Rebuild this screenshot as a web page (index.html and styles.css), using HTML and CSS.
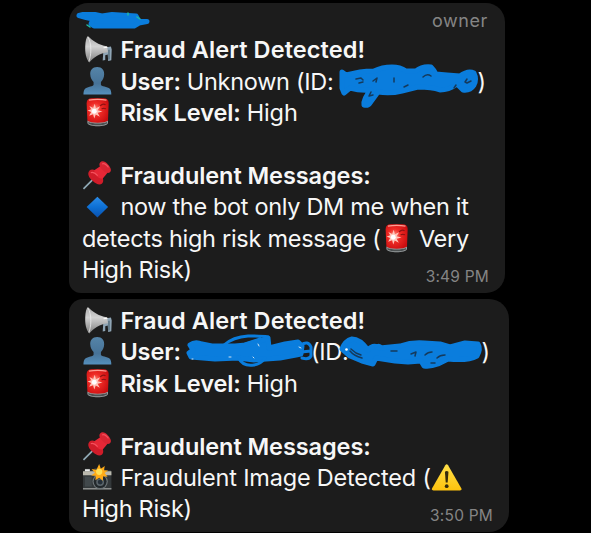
FILE: index.html
```html
<!DOCTYPE html>
<html lang="en">
<head>
<meta charset="utf-8">
<title>Fraud alerts</title>
<link rel="stylesheet" href="styles.css">
</head>
<body>
<svg class="defs" aria-hidden="true">
  <defs>
    <linearGradient id="metal" x1="0" y1="0" x2="0" y2="1"><stop offset="0" stop-color="#aaa"/><stop offset=".4" stop-color="#d2d2d2"/><stop offset="1" stop-color="#808080"/></linearGradient>
    <linearGradient id="person" x1="0" y1="0" x2="0" y2="1"><stop offset="0" stop-color="#5584a8"/><stop offset=".6" stop-color="#477398"/><stop offset="1" stop-color="#5590bd"/></linearGradient>
    <radialGradient id="lamp" cx=".4" cy=".45" r=".65"><stop offset="0" stop-color="#ff8b7d"/><stop offset=".4" stop-color="#ef2b25"/><stop offset="1" stop-color="#c90d10"/></radialGradient>
    <linearGradient id="gem" x1="0" y1="0" x2="0" y2="1"><stop offset="0" stop-color="#2b8ce8"/><stop offset=".5" stop-color="#0d70d5"/><stop offset="1" stop-color="#0a50ad"/></linearGradient>
    <linearGradient id="yellow" x1="0" y1="0" x2="0" y2="1"><stop offset="0" stop-color="#ffe04a"/><stop offset="1" stop-color="#fdc20d"/></linearGradient>
    <symbol id="horn" viewBox="0 0 32 32">
      <path d="M22 14l7.500-1.200.8 3-.4 11-3.200.7-.5-6.500-2.500.6v5l-2.600.3z" fill="#8fa5b5"/>
      <path d="M27.500 16v10" stroke="#48616f" stroke-width="1.200"/>
      <path d="M6 2C10 6 17 11.500 25.500 12.500l1 6C18 19.500 12 23.500 7.500 29 4 25.500 3 18.500 3.300 12.500 3.500 7.500 4.300 3.500 6 2z" fill="url(#metal)"/>
      <path d="M6 3c2 3 3 8 3 13s-.8 9-2 12" stroke="#ececec" fill="none" stroke-width=".8"/>
      <path d="M22 14l4-.5" stroke="#fff" stroke-width="1.200"/>
    </symbol>
    <symbol id="user" viewBox="0 0 32 32">
      <path d="M15.500 1c5 0 7.300 3.500 7.100 7.500-.1 3.500-1.500 6-3.300 7.700v3.200c2 2 8.500 1.700 9.800 4.900.6 1.500.8 3 .8 4.700H1.500c0-2 .2-3.500.9-4.900 1.500-2.900 7.600-2.700 9.400-4.700v-3.200C10 14.500 8.500 12 8.400 8.500 8.200 4.500 10.600 1 15.500 1z" fill="url(#person)"/>
    </symbol>
    <symbol id="siren" viewBox="0 0 32 32">
      <path d="M5.500 24h21v2.500c-1 4.500-20 4.500-21 0z" fill="#969b9c"/>
      <path d="M6.500 25.500c4 2 15 2 19 0v1.500c-4 2.500-15 2.500-19 0z" fill="#4b5051"/>
      <path d="M4.700 6Q5 1.600 10 1.400h12Q27 1.600 27.200 6l-.7 18c-3.500 3-17.500 3-21 0z" fill="url(#lamp)"/>
      <path d="M7 3.300q9-1.700 18 0" stroke="#ff9d92" fill="none" stroke-width="1.300"/>
      <path d="M13 7l1.200 4.500 4.300-2-2.600 4 5 1.300-5 1.300 2.300 4-4.200-2.200L12.500 22l-1.200-4.500-4 1.700 2-3.800-3.600-1.600 3.800-1.200L7.500 9.300l3.900 2z" fill="#ffc7bc"/>
      <circle cx="12.500" cy="14.500" r="2.500" fill="#fff"/>
      <path d="M18.500 9q3-3 5.500-1M20 12q2-1 4.500 0" stroke="#8e1213" fill="none" stroke-width="1.300"/>
    </symbol>
    <symbol id="pin" viewBox="0 0 32 32">
      <path d="M14 17L1.500 29.500" stroke="#91aab6" stroke-width="1.700"/>
      <path d="M7.500 11c2-2.200 5.500-1.700 9.500 1.800 4.500 4 6 8.500 3.500 11.200-2.500 2.300-6 .6-9.500-2.500C7 18.300 5 14 7.500 11z" fill="#d01c29"/>
      <path d="M12.500 10.500l6.500-4.500 7 7-5 6c-5 0-8-3.500-8.500-8.500z" fill="#e62736"/>
      <path d="M18.500 2.500c2-2.300 5.200-1 8 2 2.700 3 4 6.200 2 8-2 1.700-5 .2-7.500-2.300-2.700-2.700-4.300-5.700-2.500-7.700z" fill="#d92432"/>
      <path d="M20.500 4c2-1 4.500.8 6.500 3.500M9 13c2-1 4.500.5 7 3" stroke="#f4515d" fill="none" stroke-width="1.200"/>
    </symbol>
    <symbol id="diamond" viewBox="0 0 32 32">
      <path d="M15.700 5.800L26.600 16.300 15.700 27 4.700 16.300z" fill="url(#gem)"/>
    </symbol>
    <symbol id="camera" viewBox="0 0 32 32">
      <path d="M1 10l2-1.500V7h5v1.500h3L13 6h9l2 2.500h5.500L30 12v16H1z" fill="#33383a"/>
      <path d="M1 9.500h29v4H1z" fill="#bab8ad"/><path d="M3 7.500h5v2H3z" fill="#eee"/>
      <path d="M1 26.500h29V28H1z" fill="#8b8d8c"/>
      <path d="M3 15h7v10H3z" fill="#41484b"/>
      <circle cx="18.500" cy="20" r="7.800" fill="#6d7578"/><circle cx="18.500" cy="20" r="6.600" fill="#22282b"/><circle cx="18.500" cy="20.500" r="4" fill="#5a646a"/><circle cx="18.500" cy="20.500" r="2.500" fill="#263039"/>
      <path d="M17.500 2l1.700 5 4-3-.8 4.300 4.200.3-3.500 2.700 3 3.700-4.500-.4-.4 4.400-3.600-3-3.900 2.500.3-4.400-4.700-.4 3.900-2.700-3.500-3.800 5 .8z" fill="#ffab17"/>
      <circle cx="17.500" cy="10" r="3.200" fill="#ffdf54"/>
    </symbol>
    <symbol id="warning" viewBox="0 0 32 32">
      <path d="M14.600 3.200q1.400-2 2.800 0L31 27q.8 2-1.500 2h-27q-2.300 0-1.500-2z" fill="url(#yellow)"/>
      <path d="M14.200 10q1.800-1.500 3.600 0l-.8 11h-2z" fill="#352b0b"/><circle cx="16" cy="24.700" r="1.900" fill="#352b0b"/>
    </symbol>
  </defs>
</svg>
<main class="chat">
  <article class="bubble bubble-first">
    <header class="role">owner</header>
    <p class="line"><svg class="icon"><use href="#horn"/></svg><b class="title">Fraud Alert Detected!</b></p>
    <p class="line"><svg class="icon"><use href="#user"/></svg><b class="user">User:</b><span class="unknown">Unknown (ID:</span><span class="close">)</span></p>
    <p class="line"><svg class="icon"><use href="#siren"/></svg><b class="risk">Risk Level:</b><span class="high">High</span></p>
    <p class="line"></p>
    <p class="line"><svg class="icon"><use href="#pin"/></svg><b class="messages">Fraudulent Messages:</b></p>
    <p class="line"><svg class="icon"><use href="#diamond"/></svg><span class="now">now the bot only DM me when it</span></p>
    <p class="line"><span class="detects">detects high risk message (</span><svg class="icon inline"><use href="#siren"/></svg><span class="very">Very</span></p>
    <p class="line"><span class="end">High Risk)</span></p>
    <time class="time">3:49 PM</time>
    <svg class="scribble" viewBox="69 3 436 290">
      <path class="solid" d="M79 15.500L83 14.500H95L102 16L112 14.500L136 16L139 21.500H147L139 23L134 26H94L91 24L93 19L86 17.500z"/>
      <path d="M87 25l3 2M128 13v2M137 17l3 2" class="glint"/>
      <path class="solid" d="M342 72L346 75L360 72Q366 71 374 71Q382 67 392 67Q400 67 406 71L416 71Q422 66 431 67Q434 70 436 74L447 75L460 76Q468 70 474 73Q477 79 474 85Q470 91 463 90L457 84Q449 90 440 90Q432 87 418 87L402 91Q390 94 378 92L370 103Q368 106 364 105Q363 99 371 90Q360 91 350 88L344 93L342 88z"/>
      <path class="hole" d="M356 79l5-1 2 2M359 83l4-1M373 81l4-3-1 4M394 78v4M423 77q4-4 8-1M404 87l4-2M454 88l2-3M467 79l-2 3 2 1 4-2M371 92l-2 4 4-1"/>
    </svg>
  </article>
  <article class="bubble bubble-second">
    <p class="line"><svg class="icon"><use href="#horn"/></svg><b class="title">Fraud Alert Detected!</b></p>
    <p class="line"><svg class="icon"><use href="#user"/></svg><b class="user">User:</b><span class="id">(ID:</span><span class="close">)</span></p>
    <p class="line"><svg class="icon"><use href="#siren"/></svg><b class="risk">Risk Level:</b><span class="high">High</span></p>
    <p class="line"></p>
    <p class="line"><svg class="icon"><use href="#pin"/></svg><b class="messages">Fraudulent Messages:</b></p>
    <p class="line"><svg class="icon"><use href="#camera"/></svg><span class="image">Fraudulent Image Detected (</span><svg class="icon warn"><use href="#warning"/></svg></p>
    <p class="line"><span class="end">High Risk)</span></p>
    <time class="time">3:50 PM</time>
    <svg class="scribble" viewBox="69 299 440 233">
      <path class="solid" d="M190 345Q195 341 202 344L212 346H235L246 345L260 341L268 338L269 348L285 344L298 342L302 346L301 354L296 355L280 358L266 359L254 360L238 358L215 359L191 357L189 353L193 350z"/>
      <path d="M224 345q9-8 24-9 15 0 20 1M245 344l15-5M238 357q5 10 16 8 7-1 11-7M301 345q7-5 10 2v9q-2 4-9 2M301 352l10-1" stroke-width="3"/>
      <path class="solid" d="M342 349Q345 341 352 339Q360 339 368 350Q373 344 380 348L400 346Q412 342 424 343L440 344L450 347L465 343L478 344Q481 349 477 356Q468 361 448 359L438 364Q430 367 424 366L421 361L408 362L395 361L376 358L373 364L362 361L350 356z"/>
      <path d="M375 347q4-4 7 0" stroke-width="2.500"/>
      <path class="hole" d="M350 351q4 5 12 7M351 349l5 4 5 2M391 351h6M411 354l5-2-1 4M425 355q3-3 7-3M437 358q3-3 8-3M431 363h4"/>
      <circle cx="346.500" cy="349.500" r="1.300" class="dot"/>
      <path class="specks" d="M192 359h1M229 357h2M258 344l1 2M253 357l1 1M299 347l2 1"/>
    </svg>
  </article>
</main>
</body>
</html>
```

FILE: styles.css
```css
* { box-sizing: border-box; }
body {
  margin: 0;
  width: 591px;
  height: 533px;
  overflow: hidden;
  background: #000;
  color: #f7f7f7;
  font-family: Inter, "Liberation Sans", sans-serif;
  font-size: 23.5px;
}
.defs { position: absolute; width: 0; height: 0; }
.chat {
  display: flex;
  flex-direction: column;
  align-items: flex-start;
  gap: 6px;
  padding: 3px 0 0 69px;
}
.bubble {
  position: relative;
  background: #1c1c1c;
  border-radius: 19px 19px 19px 12px;
  padding-left: 13px;
}
.bubble-first { width: 436px; height: 290px; }
.bubble-second { width: 440px; height: 233px; padding-top: 6px; border-radius: 14px 20px 20px 14px; }
.role {
  height: 31.300px;
  padding: 6px 17px 0 0;
  text-align: right;
  font-size: 18px;
  line-height: 24px;
  letter-spacing: .6px;
  color: #858585;
}
.line {
  display: flex;
  height: 31.400px;
  margin: 0;
  line-height: 31.400px;
  white-space: pre;
}
.line b { font-weight: 600; }
.line span { letter-spacing: -.3px; }
.icon { flex: none; width: 31.400px; height: 31.400px; margin-right: 7px; }
.title { letter-spacing: .1px; }
.user, .risk { letter-spacing: -.1px; margin-right: 6px; }
.messages { letter-spacing: -.08px; }
.line .high { letter-spacing: -.1px; }
.line .now { letter-spacing: -.33px; }
.line .detects { letter-spacing: -.28px; }
.line .image { letter-spacing: -.2px; }
.inline { margin: 0 7px 0 0; }
.warn { margin: 0; }
.line .close { position: absolute; left: 408.500px; }
.bubble-second .line .close { left: 412.500px; }
.id { position: absolute; left: 242px; }
.time {
  position: absolute;
  right: 16px;
  bottom: 6px;
  font-size: 15.500px;
  line-height: 20px;
  letter-spacing: .2px;
  color: #858585;
}
.scribble {
  position: absolute;
  inset: 0;
  width: 100%;
  height: 100%;
  fill: none;
  stroke: #0a7ddd;
  stroke-linecap: round;
  stroke-linejoin: round;
}
.scribble .solid { fill: #0a7ddd; stroke-width: 5px; }
.scribble .hole { stroke: #153a5c; stroke-width: 1.500px; }
.scribble .glint { stroke: #20bba5; stroke-width: 1.500px; }
.scribble .specks { stroke: #cfe3f2; stroke-width: 1px; }
.scribble .dot { fill: #fff; stroke: none; }
```
